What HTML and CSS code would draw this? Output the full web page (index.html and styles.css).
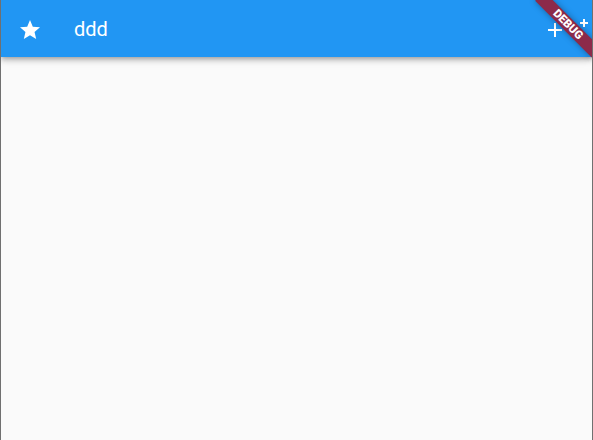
FILE: index.html
```html
<!DOCTYPE html>
<html lang="en">
<head>
  <meta charset="UTF-8">
  <meta name="viewport" content="width=device-width, initial-scale=1.0">
  <title>ddd</title>
  <link rel="stylesheet" href="styles.css">
</head>
<body>
  <div class="app">
    <header class="app-bar">
      <button class="icon-button leading" aria-label="star">
        <svg viewBox="0 0 24 24" width="24" height="24">
          <path d="M12 17.27L18.18 21l-1.64-7.03L22 9.24l-7.19-.61L12 2 9.19 8.63 2 9.24l5.46 4.73L5.82 21z" fill="#fff"/>
        </svg>
      </button>
      <h1 class="title">ddd</h1>
      <div class="actions">
        <button class="icon-button" aria-label="add">
          <svg viewBox="0 0 24 24" width="24" height="24">
            <path d="M19 13h-6v6h-2v-6H5v-2h6V5h2v6h6v2z" fill="#fff"/>
          </svg>
        </button>
        <button class="icon-button extra" aria-label="add more">
          <svg viewBox="0 0 24 24" width="24" height="24">
            <rect x="3" y="8" width="5" height="5" fill="#c9c9c9"/>
            <rect x="3" y="15" width="5" height="4" fill="#c9c9c9"/>
            <path d="M13 1h2v3h3v2h-3v3h-2V6h-3V4h3z" fill="#fff"/>
          </svg>
        </button>
      </div>
    </header>
    <main class="content"></main>
    <div class="debug-banner"><span>DEBUG</span></div>
  </div>
</body>
</html>
```

FILE: styles.css
```css
html, body {
  margin: 0;
  height: 100%;
}

body {
  font-family: Roboto, "Liberation Sans", sans-serif;
  background: #fafafa;
  overflow: hidden;
}

.app {
  position: relative;
  height: 100%;
  display: flex;
  flex-direction: column;
  border-left: 1px solid #707070;
  border-right: 1px solid #707070;
  overflow: hidden;
}

.app-bar {
  height: 57px;
  background: #2196f3;
  color: #fff;
  display: flex;
  align-items: center;
  box-shadow: 0 2px 4px -1px rgba(0,0,0,0.2), 0 4px 5px 0 rgba(0,0,0,0.14), 0 1px 10px 0 rgba(0,0,0,0.12);
  position: relative;
  z-index: 1;
  flex-shrink: 0;
}

.icon-button {
  width: 48px;
  height: 48px;
  padding: 0;
  border: none;
  background: none;
  display: flex;
  align-items: center;
  justify-content: center;
  flex-shrink: 0;
}

.leading {
  width: 56px;
  height: 56px;
  margin: 2px 0 0 1px;
}

.title {
  margin: 1px 0 0 16px;
  flex: 1;
  font-size: 20px;
  font-weight: 400;
  line-height: 1;
}

.actions {
  display: flex;
  margin-right: -2px;
  margin-top: 2px;
}

.extra {
  width: 24px;
  margin-left: -9px;
}

.content {
  flex: 1;
  background: #fafafa;
}

.debug-banner {
  position: absolute;
  top: 24px;
  right: -16px;
  width: 80px;
  height: 13px;
  margin-top: -6px;
  background: rgb(140, 42, 74);
  box-shadow: 0 0 6px rgba(0,0,0,0.35);
  transform: rotate(45deg);
  display: flex;
  align-items: center;
  justify-content: center;
  z-index: 2;
}

.debug-banner span {
  color: #fff;
  font-size: 11.5px;
  font-weight: 900;
  line-height: 1;
}
```
